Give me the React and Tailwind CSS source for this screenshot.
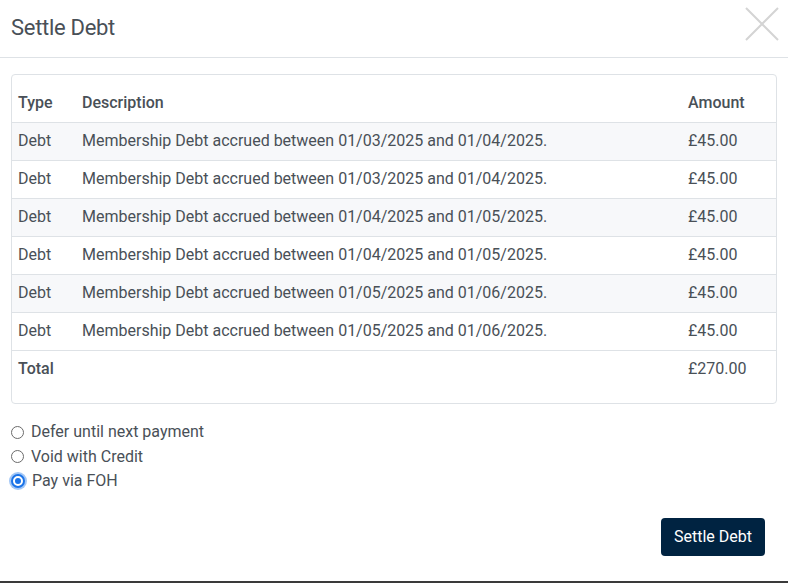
const rows = [
  ['Debt', 'Membership Debt accrued between 01/03/2025 and 01/04/2025.', '£45.00'],
  ['Debt', 'Membership Debt accrued between 01/03/2025 and 01/04/2025.', '£45.00'],
  ['Debt', 'Membership Debt accrued between 01/04/2025 and 01/05/2025.', '£45.00'],
  ['Debt', 'Membership Debt accrued between 01/04/2025 and 01/05/2025.', '£45.00'],
  ['Debt', 'Membership Debt accrued between 01/05/2025 and 01/06/2025.', '£45.00'],
  ['Debt', 'Membership Debt accrued between 01/05/2025 and 01/06/2025.', '£45.00'],
]

const options = ['Defer until next payment', 'Void with Credit', 'Pay via FOH']

export default function App() {
  return (
    <div className="flex h-[583px] w-[788px] flex-col bg-white text-[#495057]" style={{ fontFamily: 'Roboto, "Liberation Sans", sans-serif' }}>
      <div className="flex h-[58px] items-center justify-between border-b border-[#dee2e6] pl-[11px] pr-[9px]">
        <h1 className="pb-[3px] text-[22px] font-normal tracking-[-0.3px]">Settle Debt</h1>
        <svg width="34" height="34" viewBox="0 0 34 34" className="mb-[10px]">
          <path d="M1 1 L33 33 M33 1 L1 33" stroke="#d4d4d4" strokeWidth="2" />
        </svg>
      </div>

      <div className="mx-[11px] mt-[16px] rounded-[4px] border border-[#dee2e6] pb-[16px]">
        <table className="w-full border-collapse text-[16px]">
          <thead>
            <tr className="h-[47px] border-b border-[#dee2e6] text-left">
              <th className="w-[63px] pl-[6px] pt-[10px] font-medium">Type</th>
              <th className="pl-[7px] pt-[10px] font-medium">Description</th>
              <th className="w-[88px] pt-[10px] font-medium">Amount</th>
            </tr>
          </thead>
          <tbody>
            {rows.map((r, i) => (
              <tr key={i} className={`h-[38px] border-b border-[#dee2e6] ${i % 2 === 0 ? 'bg-[#f7f8fa]' : 'bg-white'}`}>
                <td className="pl-[6px]">{r[0]}</td>
                <td className="pl-[7px]">{r[1]}</td>
                <td>{r[2]}</td>
              </tr>
            ))}
            <tr className="h-[37px]">
              <td className="pl-[6px] font-medium">Total</td>
              <td />
              <td>£270.00</td>
            </tr>
          </tbody>
        </table>
      </div>

      <div className="ml-[11px] mt-[18px] flex flex-col gap-[4px] text-[16px]">
        {options.map((o, i) => (
          <label key={o} className="flex h-[20.5px] items-center gap-[7px]">
            {i === 2 ? (
              <span className="flex h-[14px] w-[14px] items-center justify-center rounded-full bg-[#1a73e8] ring-[2px] ring-[#1a73e8]/40">
                <span className="h-[10px] w-[10px] rounded-full border-[2px] border-white bg-[#1a73e8]" />
              </span>
            ) : (
              <span className="h-[13px] w-[13px] rounded-full border border-[#6b6b6b] bg-white" />
            )}
            <span>{o}</span>
          </label>
        ))}
      </div>

      <div className="mt-auto flex justify-end pb-[25px] pr-[23px]">
        <button className="h-[38px] w-[104px] rounded-[4px] bg-[#002341] text-[16px] text-white">Settle Debt</button>
      </div>
      <div className="h-[2px] bg-[#3a3a3a]" />
    </div>
  )
}
